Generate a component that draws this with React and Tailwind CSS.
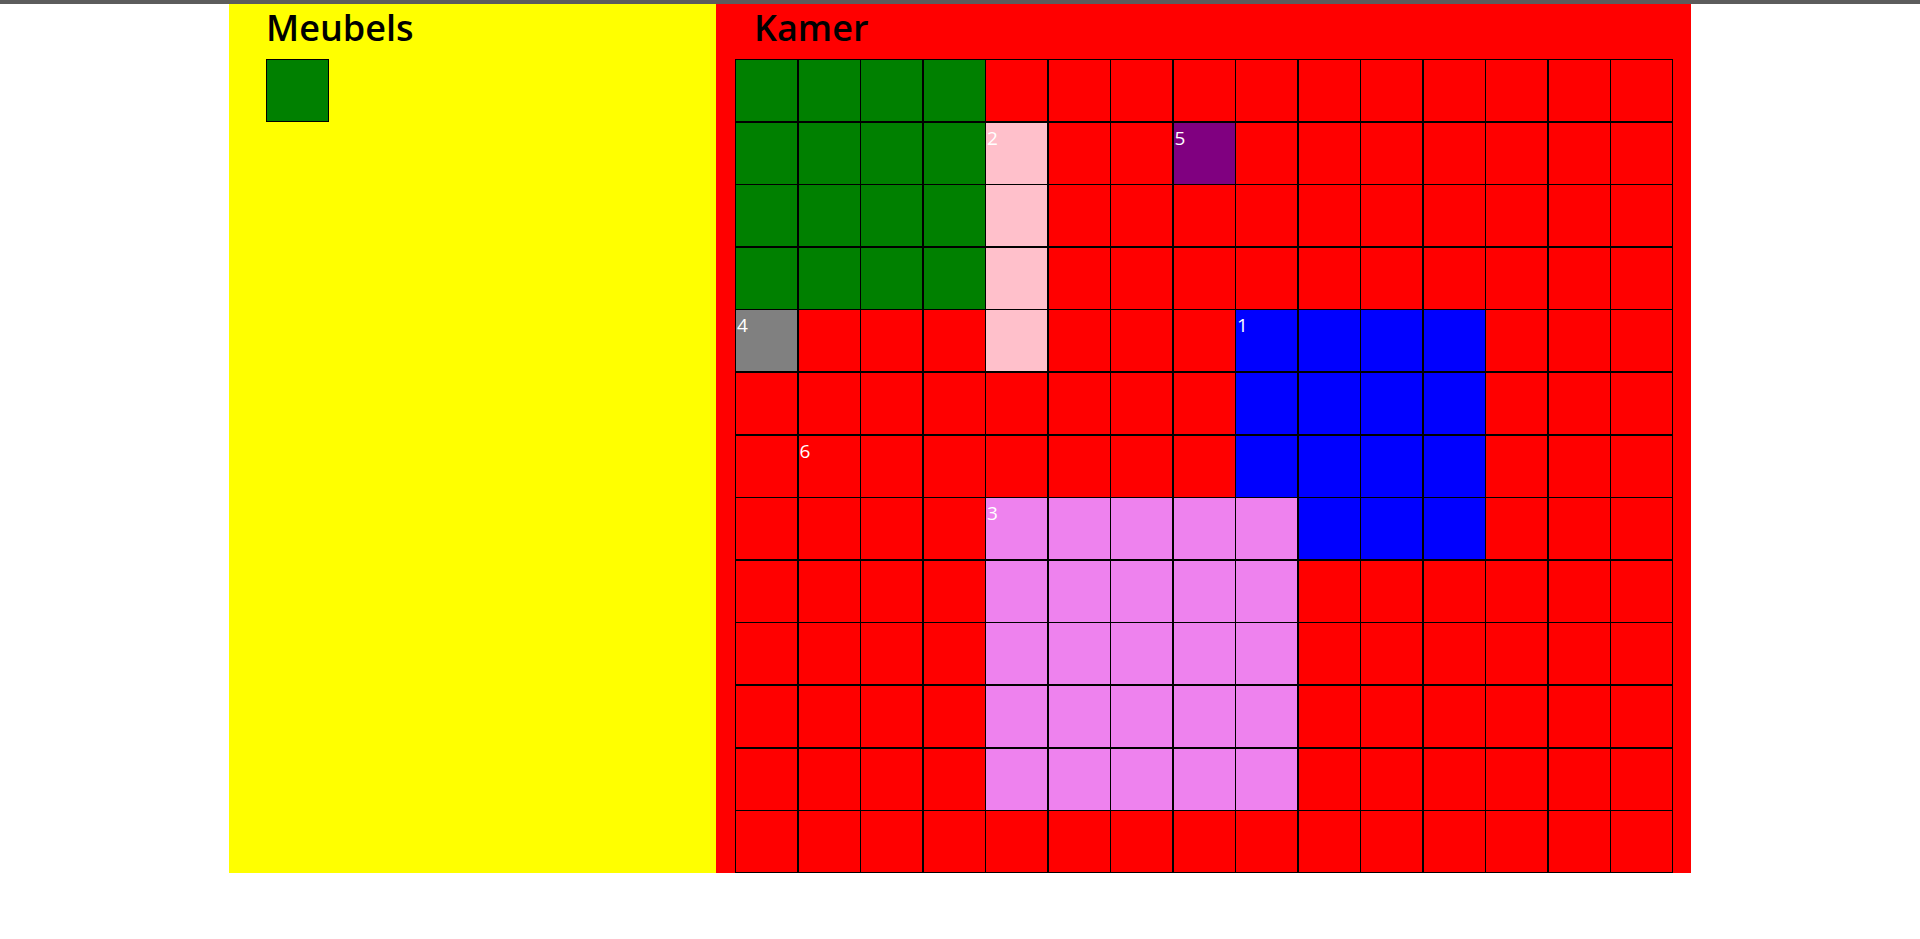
const COLS = 15;
const ROWS = 13;

// room items: color fills and a label on the first cell
const items = [
  { id: 1, color: "bg-[#0000ff]", cells: [[4, 8, 4, 4], [7, 9, 1, 3]] },
  { id: 2, color: "bg-[#ffc0cb]", cells: [[1, 4, 4, 1]] },
  { id: 3, color: "bg-[#ee82ee]", cells: [[7, 4, 5, 5]] },
  { id: 4, color: "bg-[#808080]", cells: [[4, 0, 1, 1]] },
  { id: 5, color: "bg-[#800080]", cells: [[1, 7, 1, 1]] },
  { id: 6, color: "bg-[#ff0000]", cells: [[6, 1, 1, 1]] },
  { id: 0, color: "bg-[#008000]", cells: [[0, 0, 4, 4]], hideLabel: true },
];

const buildGrid = () => {
  const grid = Array.from({ length: ROWS }, () =>
    Array.from({ length: COLS }, () => ({ color: "bg-[#ff0000]", label: null }))
  );
  items.forEach((item) => {
    item.cells.forEach(([r, c, h, w]) => {
      for (let y = r; y < r + h; y++) {
        for (let x = c; x < c + w; x++) {
          grid[y][x].color = item.color;
        }
      }
    });
    const [r, c] = item.cells[0];
    if (!item.hideLabel) grid[r][c].label = item.id;
  });
  return grid;
};

const App = () => {
  const grid = buildGrid();

  return (
    <div className="min-h-screen bg-white" style={{ fontFamily: '"Open Sans", "Noto Sans", sans-serif' }}>
      <div className="h-[4px] bg-[#5c5c5c]" />
      <div className="mx-auto flex w-[1462px]">
        <div className="w-[487px] bg-[#ffff00] pl-[37px]">
          <h1 className="text-[36px] font-semibold leading-[48px] text-black">Meubels</h1>
          <div className="mt-[7px] h-[63px] w-[63px] border border-black bg-[#008000]" />
        </div>
        <div className="flex-1 bg-[#ff0000] pl-[19px]">
          <h1 className="pl-[19px] text-[36px] font-semibold leading-[48px] text-black">Kamer</h1>
          <div className="mt-[7px] grid w-[938px] grid-cols-15 gap-[1.5px] bg-black p-px">
            {grid.flat().map((cell, i) => (
              <div key={i} className={`relative h-[61.1px] ${cell.color}`}>
                {cell.label !== null && (
                  <span className="absolute left-px top-[2px] text-[19px] leading-[26px] text-white">
                    {cell.label}
                  </span>
                )}
              </div>
            ))}
          </div>
        </div>
      </div>
    </div>
  );
};

export default App;
